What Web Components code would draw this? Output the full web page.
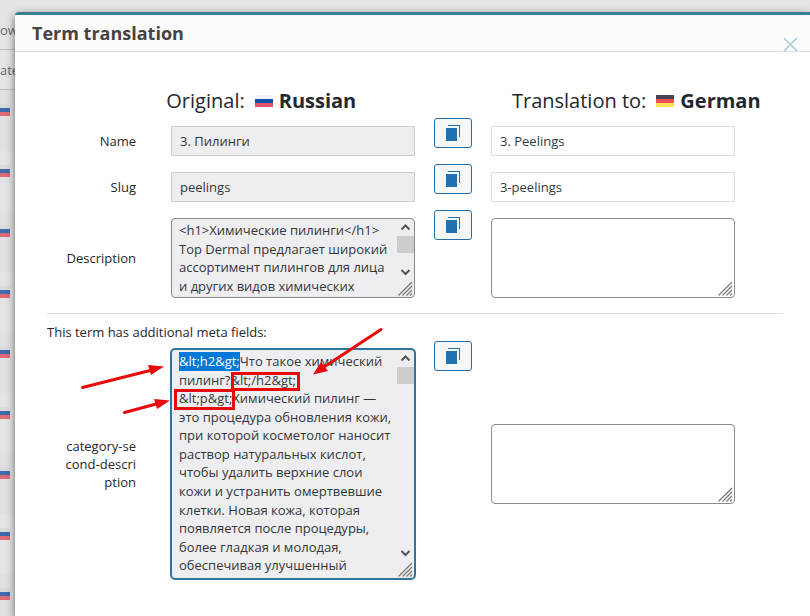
<!DOCTYPE html>
<html lang="en">
<head>
<meta charset="utf-8">
<title>Term translation</title>
<style>
  html, body { margin: 0; height: 100%; overflow: hidden; }
  body {
    background: #e4e4e4;
    color: #23282d;
    font: 13px/18px "Open Sans", "Noto Sans", sans-serif;
  }
</style>
</head>
<body>

<term-list></term-list>

<term-dialog heading="Term translation">
  <language-pair>
    <language-name slot="from" prefix="Original:" flag="ru">Russian</language-name>
    <language-name slot="to" prefix="Translation to:" flag="de">German</language-name>
  </language-pair>
  <field-group>
    <field-row label="Name" original="3. Пилинги" translation="3. Peelings"></field-row>
    <field-row label="Slug" original="peelings" translation="3-peelings"></field-row>
    <field-row label="Description" multiline original="&lt;h1&gt;Химические пилинги&lt;/h1&gt;
Top Dermal предлагает широкий ассортимент пилингов для лица и других видов химических"></field-row>
  </field-group>
  <field-group heading="This term has additional meta fields:">
    <field-row label="category-second-description" multiline tall select="10" original="&amp;lt;h2&amp;gt;Что такое химический пилинг?&amp;lt;/h2&amp;gt;
&amp;lt;p&amp;gt;Химический пилинг — это процедура обновления кожи, при которой косметолог наносит раствор натуральных кислот, чтобы удалить верхние слои кожи и устранить омертвевшие клетки. Новая кожа, которая появляется после процедуры, более гладкая и молодая, обеспечивая улучшенный"><red-marks></red-marks></field-row>
  </field-group>
</term-dialog>

<script>
  class Base extends HTMLElement {
    connectedCallback() {
      if (this.shadowRoot) return;
      this.attachShadow({ mode: 'open' }).innerHTML =
        '<style>*{box-sizing:border-box}</style>' + this.render();
      this.ready();
    }
    ready() {}
    attr(name) {
      return (this.getAttribute(name) || '')
        .replace(/&/g, '&amp;').replace(/</g, '&lt;').replace(/>/g, '&gt;').replace(/"/g, '&quot;');
    }
  }

  customElements.define('country-flag', class extends Base {
    render() {
      const de = this.getAttribute('code') === 'de';
      const c = de ? ['#464655', '#f0505a', '#ffe15a'] : ['#f1f3f3', '#124fa8', '#e4566a'];
      return `<style>
        :host { display: inline-block; width: 18px; height: 12px; }
        svg { display: block; width: 100%; height: 100%; }
      </style>
      <svg viewBox="0 0 18 12" aria-hidden="true">
        <path fill="${c[0]}" d="M0 0h18v4H0z"/><path fill="${c[1]}" d="M0 4h18v4H0z"/><path fill="${c[2]}" d="M0 8h18v4H0z"/>
      </svg>`;
    }
  });

  /* The dimmed list of terms behind the dialog */
  customElements.define('term-list', class extends Base {
    render() {
      return `<style>
        :host { display: block; color: #65696c; }
        .bar { height: 50px; padding-top: 21px; border-bottom: 1px solid #bebebe; }
        .head { height: 40px; padding-top: 11px; border-bottom: 1px solid #bebebe; }
        .row { height: 60px; padding-top: 14px; background: #e4e4e4; }
        .row:nth-child(odd) { height: 61px; background: #e1e1e1; }
        .flag { width: 10px; height: 12px;
          background: linear-gradient(#dadada 0 4px, #3f6bac 4px 8px, #dd6a74 8px 12px); }
      </style>
      <div class="bar">ow</div>
      <div class="head">ate</div>
      ${'<div class="row"><div class="flag"></div></div>'.repeat(9)}`;
    }
  });

  customElements.define('term-dialog', class extends Base {
    render() {
      return `<style>
        :host {
          position: absolute; inset: 12px 0 0 15px; overflow: hidden;
          display: flex; flex-direction: column;
          background: #fff; border-top: 3px solid #3d7d91; border-radius: 4px 0 0 0;
          box-shadow: 0 3px 8px rgba(0,0,0,.55);
        }
        header { display: flex; justify-content: space-between; height: 37px; flex: none;
          padding: 0 12px 0 17px; background: #fcfcfc; border-bottom: 1px solid #ddd; }
        h1 { margin: 6px 0 0; font-size: 18px; line-height: 24px; font-weight: 700; color: #444; }
        button { align-self: flex-end; width: 15px; height: 14px; padding: 0; border: 0; background: none; }
        svg { display: block; width: 15px; height: 15px; }
        main { padding-top: 35px; }
      </style>
      <header>
        <h1>${this.attr('heading')}</h1>
        <button type="button" aria-label="Close"><svg viewBox="0 0 15 15"><path d="M1 1l13 13M14 1L1 14" stroke="#a9cdd5" stroke-width="1.5"/></svg></button>
      </header>
      <main><slot></slot></main>`;
    }
  });

  customElements.define('language-pair', class extends Base {
    render() {
      return `<style>
        :host { display: grid; grid-template-columns: 4fr 3fr; padding: 0 13px 0 32px; }
        div { display: flex; justify-content: center; }
      </style>
      <div><slot name="from"></slot></div><div><slot name="to"></slot></div>`;
    }
  });

  customElements.define('language-name', class extends Base {
    render() {
      return `<style>
        :host { display: block; }
        h2 { margin: 0; font-size: 20px; line-height: 28px; font-weight: 400; color: #23282d;
          display: flex; align-items: center; white-space: nowrap; }
        country-flag { margin: 0 6px 0 10px; }
      </style>
      <h2>${this.attr('prefix')}<country-flag code="${this.attr('flag')}"></country-flag><b><slot></slot></b></h2>`;
    }
  });

  customElements.define('field-group', class extends Base {
    render() {
      const h = this.attr('heading');
      return `<style>
        :host { display: block; padding: 3px 27px 0 32px; }
        :host([heading]) { padding-top: 15px; }
        .title { border-top: 1px solid #ddd; padding-top: 9px; }
        p { margin: 0; }
        .rows { display: grid; gap: 8px; padding-right: 48px; }
      </style>
      ${h ? `<div class="title"><p>${h}</p></div>` : ''}
      <div class="rows"><slot></slot></div>`;
    }
  });

  customElements.define('copy-button', class extends Base {
    render() {
      return `<style>
        :host { display: block; }
        button { display: flex; align-items: center; justify-content: center; width: 38px; height: 30px;
          padding: 0; border: 1px solid #2271a8; border-radius: 3px; background: #f6f7f7; }
        svg { display: block; width: 14px; height: 16px; }
      </style>
      <button type="button" aria-label="Copy original">
        <svg viewBox="0 0 14 16"><path fill="#2271b1" d="M0 3h11v13H0z"/><path fill="#2271b1" d="M2 0h12v12h-1V1H2z"/></svg>
      </button>`;
    }
  });

  /* Scroll arrows, thumb and resize grip drawn along the right edge of a text area */
  customElements.define('area-chrome', class extends Base {
    render() {
      const bar = `<svg class="up" viewBox="0 0 17 17"><path d="M4.5 10.5l4-4 4 4" /></svg>
        <i></i><span></span>
        <svg viewBox="0 0 17 17"><path d="M4.5 7l4 4 4-4" /></svg>`;
      return `<style>
        :host { position: absolute; inset: 1px 1px 1px auto; width: 17px; display: flex;
          flex-direction: column; justify-content: flex-end; pointer-events: none; }
        svg { width: 17px; height: 17px; flex: none; fill: none; stroke: #555; stroke-width: 2; }
        i { height: 17px; flex: none; background: #cdcdcd; }
        span { flex: 1; }
        .grip { stroke: #777; stroke-width: 1.2; }
      </style>
      ${this.hasAttribute('scroll') ? bar : ''}
      <svg class="grip" viewBox="0 0 17 17"><path d="M1.5 15.5L15 2M5.5 15.5L15 6M9.5 15.5L15 10M13 15.5l2-2"/></svg>`;
    }
  });

  customElements.define('field-row', class extends Base {
    render() {
      const l = this.attr('label'), o = this.attr('original'), t = this.attr('translation');
      const multi = this.hasAttribute('multiline');
      return `<style>
        :host { display: grid; grid-template-columns: 105px minmax(0,1fr) 38px minmax(0,1fr); column-gap: 19px; }
        label { align-self: center; justify-self: end; max-width: 71px; margin: 8px 16px 0 0;
          text-align: right; word-break: break-all; }
        .box { position: relative; align-self: center; margin-top: 8px; }
        input, textarea { display: block; width: 100%; margin: 0; font: inherit; color: #32373c; outline: 0; }
        input { height: 30px; padding: 0 8px; border: 1px solid #ddd; border-radius: 1px; background: #fff; }
        textarea { height: 80px; padding: 2px 7px; line-height: 1.43; border: 1px solid #8a8a8a; border-radius: 4px;
          resize: none; scrollbar-width: none; background: #fff; }
        .source input { border-color: #ccc; background: #eeeef0; }
        .source textarea { padding-right: 20px; background: #eeeef0; }
        :host([tall]) .source textarea { height: 230px; border-color: #2f749c; box-shadow: 0 0 0 1px #2f749c; }
        textarea::selection { background: #0078d7; color: #fff; }
      </style>
      <label for="source">${l}</label>
      <div class="box source">${multi
        ? `<textarea id="source" readonly spellcheck="false">${o}</textarea><area-chrome scroll></area-chrome>`
        : `<input id="source" type="text" readonly value="${o}">`}<slot></slot></div>
      <copy-button></copy-button>
      <div class="box">${multi
        ? `<textarea aria-label="${l} translation"></textarea><area-chrome></area-chrome>`
        : `<input type="text" aria-label="${l} translation" value="${t}">`}</div>`;
    }
    ready() {
      if (!this.hasAttribute('select')) return;
      const area = this.shadowRoot.getElementById('source');
      area.focus({ preventScroll: true });
      area.setSelectionRange(0, Number(this.getAttribute('select')));
    }
  });

  /* Hand-drawn frames and arrows pointing at the escaped tags */
  customElements.define('red-marks', class extends Base {
    render() {
      return `<style>
        :host { position: absolute; inset: 0 auto auto 0; pointer-events: none; }
        svg { display: block; width: 244px; height: 230px; overflow: visible; }
      </style>
      <svg viewBox="171 349 244 230" aria-hidden="true">
        <g fill="none" stroke="#e8090c" stroke-width="3">
          <path d="M232.500 373.500h66v16h-66zM175.500 390.500h58v18h-58z"/>
          <path stroke-linecap="round" d="M82.500 387.500L152 370M124.500 412.500L158 403.500M381 329.500L324 367"/>
        </g>
        <g fill="#e8090c">
          <path d="M164 366.500L148 365l3 10zM170 400.500L154 399l3 10zM313 374.500L321 362l7 9z"/>
        </g>
      </svg>`;
    }
  });
</script>
</body>
</html>
